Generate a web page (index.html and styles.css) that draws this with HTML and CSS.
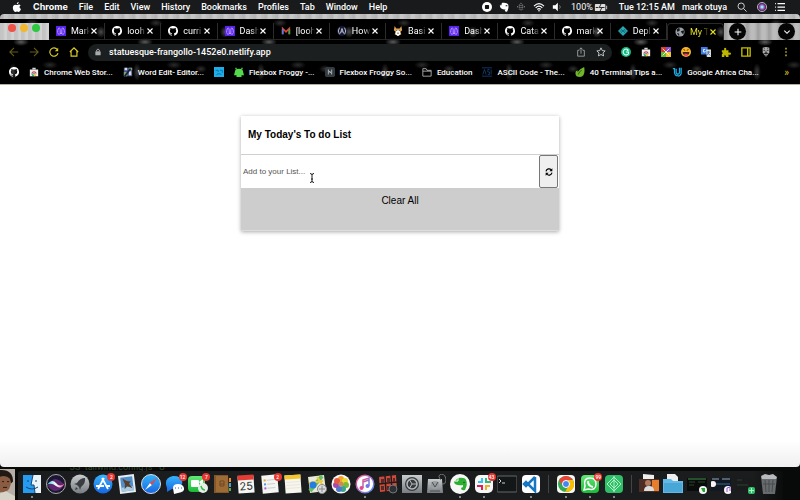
FILE: index.html
```html
<!DOCTYPE html>
<html lang="en">
<head>
<meta charset="utf-8">
<title>My Today's To do List</title>
<link rel="stylesheet" href="styles.css">
</head>
<body>
<svg class="defs" aria-hidden="true">
  <defs>
    <symbol id="github" viewBox="0 0 16 16"><path fill="#fff" d="M8 0C3.58 0 0 3.58 0 8c0 3.54 2.29 6.53 5.47 7.59.4.07.55-.17.55-.38v-1.5c-2.01.37-2.53-.49-2.69-.94-.09-.23-.48-.94-.82-1.13-.28-.15-.68-.52-.01-.53.63-.01 1.08.58 1.23.82.72 1.21 1.87.87 2.33.66.07-.52.28-.87.51-1.07-1.78-.2-3.64-.89-3.64-3.95 0-.87.31-1.59.82-2.15-.08-.2-.36-1.02.08-2.12 0 0 .67-.21 2.2.82a7.6 7.6 0 0 1 4 0c1.53-1.04 2.2-.82 2.2-.82.44 1.1.16 1.92.08 2.12.51.56.82 1.27.82 2.15 0 3.07-1.87 3.75-3.65 3.95.29.25.54.73.54 1.48v2.2c0 .21.15.46.55.38A8 8 0 0 0 8 0z"/></symbol>
    <symbol id="close" viewBox="0 0 8 8"><path d="M1.500 1.500l5 5M6.500 1.500l-5 5" stroke="currentColor" stroke-width="1.100" fill="none"/></symbol>
    <symbol id="purple" viewBox="0 0 12 12"><path fill="#5a22f0" d="M0 0h12v12H0z"/><path d="M2 8c0-7 3-7 3-3v3c0 2 2 2 2 0V5c0-4 3-4 3 3M2 9l2 1 2-2 2 2 2-1" fill="none" stroke="#c9b3ff"/></symbol>
    <symbol id="store" viewBox="0 0 12 12"><path fill="#eee" d="M1 3h10v8H1z"/><path fill="#d8d8d8" d="M4 1h4v2H4z"/><path fill="#e33b2e" d="M3 8a3 3 0 0 1 6 0z"/><path fill="#2ca94f" d="M3 8h3v3C4 11 3 10 3 8z"/><path fill="#f9c51b" d="M6 8h3c0 2-1 3-3 3z"/><circle cx="6" cy="8" r="1.400" fill="#3977e8" stroke="#fff" stroke-width=".6"/></symbol>
    <linearGradient id="blue" x2="0" y2="1"><stop stop-color="#35b5fa"/><stop offset="1" stop-color="#1765e3"/></linearGradient>
    <linearGradient id="green" x2="0" y2="1"><stop stop-color="#62e875"/><stop offset="1" stop-color="#19ba36"/></linearGradient>
    <linearGradient id="silver" x2="0" y2="1"><stop stop-color="#c9cdd0"/><stop offset="1" stop-color="#777c80"/></linearGradient>
    <linearGradient id="tune" x2="1" y2="1"><stop stop-color="#f74d86"/><stop offset="1" stop-color="#4c8dfa"/></linearGradient>
    <radialGradient id="siri"><stop stop-color="#fff"/><stop offset=".25" stop-color="#65d7ed"/><stop offset=".6" stop-color="#a2379d"/><stop offset="1" stop-color="#171936"/></radialGradient>
    <linearGradient id="wave"><stop stop-color="#35cfe0"/><stop offset=".5" stop-color="#fff"/><stop offset="1" stop-color="#ef3f8f"/></linearGradient>
  </defs>
</svg>

<header class="menubar">
  <nav class="menus" aria-label="Application menu">
    <svg class="i10" viewBox="0 0 16 18"><path fill="#fff" d="M11 0c.1 2-1.500 4-3.400 4C7.400 2 9 .3 11 0zM14.500 6c-3 2-2.300 5.600.7 6.800C14 16 12.500 18 11 18c-1 0-1.700-.7-3-.7s-2 .7-3 .7c-2.300 0-4.500-4-4.500-7.500C.5 7 2.600 4.800 5 4.800c1.300 0 2.200.8 3.200.8s2-.9 3.600-.9c1 0 2 .4 2.700 1.300z"/></svg>
    <strong>Chrome</strong><span>File</span><span>Edit</span><span>View</span><span>History</span><span>Bookmarks</span><span>Profiles</span><span>Tab</span><span>Window</span><span>Help</span>
  </nav>
  <div class="status">
    <svg class="i10" viewBox="0 0 12 12"><circle cx="6" cy="6" r="6" fill="#fff"/><rect x="3.500" y="3.500" width="5" height="5" rx="1" fill="#111"/></svg>
    <svg class="i10" viewBox="0 0 12 12"><path fill="#fff" d="M1 4l3-3c2 0 6 0 7 2 1 3 0 6-1 8-1 1-3 1-3-1l1-1H6c-3 0-5-2-5-5z"/><path fill="#111" d="M8 4h2v1H8zM3 1v3H1z"/></svg>
    <svg class="i10" viewBox="0 0 12 12"><path d="M6 1v10M4 3v6M8 3v6M2 5v2M10 5v2" stroke="#aaa" stroke-dasharray="1.500 1"/></svg>
    <svg class="i12" viewBox="0 0 14 12"><path d="M1 5q6-6 12 0M3 7q4-4 8 0M5 9q2-2 4 0" fill="none" stroke="#fff" stroke-width="1.400"/><circle cx="7" cy="10.500" r="1" fill="#fff"/></svg>
    <svg class="i10" viewBox="0 0 12 12"><path fill="#fff" d="M1 4h3l3-3v10L4 8H1z"/><path d="M9 4q2 2 0 4" fill="none" stroke="#888"/></svg>
    <span class="pct">100%</span>
    <svg class="i14 battery" viewBox="0 0 16 10"><rect x="1" y="1" width="12" height="8" rx="1" fill="#ddd"/><path fill="#ddd" d="M14 3h1v4h-1z"/><path d="M2 5h3M9 5h3M8 1L6 5h3L7 9" fill="none" stroke="#111"/></svg>
    <span class="time">Tue 12:15 AM</span><span>mark otuya</span>
    <svg class="i10 push" viewBox="0 0 12 12"><circle cx="5" cy="5" r="3.800" fill="none" stroke="#eee"/><path d="M8 8l3.500 3.500" stroke="#eee"/></svg>
    <svg class="i10 push" viewBox="0 0 12 12"><circle cx="6" cy="6" r="5.500" fill="url(#siri)" stroke="#ccc"/></svg>
    <svg class="i12" viewBox="0 0 14 12"><path d="M4 2h9M4 6h9M4 10h9M1 2h1M1 6h1M1 10h1" stroke="#fff" stroke-width="1.500"/></svg>
  </div>
</header>

<div class="window">
  <div class="frame"></div>
  <div class="chrome">
    <div class="tabstrip">
      <div class="lights"><i class="red"></i><i class="amber"></i><i class="lime"></i></div>
      <div class="tabs">
        <div class="tab"><svg><use href="#purple"/></svg><span>Mark</span><button aria-label="Close"><svg><use href="#close"/></svg></button></div>
        <div class="tab"><svg><use href="#github"/></svg><span>looh</span><button aria-label="Close"><svg><use href="#close"/></svg></button></div>
        <div class="tab"><svg><use href="#github"/></svg><span>curri</span><button aria-label="Close"><svg><use href="#close"/></svg></button></div>
        <div class="tab"><svg><use href="#purple"/></svg><span>Dash</span><button aria-label="Close"><svg><use href="#close"/></svg></button></div>
        <div class="tab"><svg viewBox="0 0 12 12"><path d="M2 10V3l4 4 4-4v7" fill="none" stroke="#e94235" stroke-width="2"/><path d="M2 4v6" stroke="#4285f4" stroke-width="2"/><path d="M10 4v6" stroke="#34a853" stroke-width="2"/></svg><span>[looh</span><button aria-label="Close"><svg><use href="#close"/></svg></button></div>
        <div class="tab"><svg viewBox="0 0 12 12"><circle cx="6" cy="6" r="6" fill="#15183a"/><path d="M3 2Q0 6 3 10M9 2q3 4 0 8M4 9l2-6 2 6M5 7h2" fill="none" stroke="#ddd"/></svg><span>How</span><button aria-label="Close"><svg><use href="#close"/></svg></button></div>
        <div class="tab"><svg viewBox="0 0 12 12"><path fill="#d9a050" d="M2 0l2 3h4l2-3 1 5-2 2 1 3-4 2-4-2 1-3-2-2z"/><path fill="#fff" d="M4 5h4l1 5-3 2-3-2z"/><path fill="#222" d="M4 5h1v1H4zM7 5h1v1H7zM5 8h2v1H5z"/></svg><span>Basi</span><button aria-label="Close"><svg><use href="#close"/></svg></button></div>
        <div class="tab"><svg><use href="#purple"/></svg><span>Dash</span><button aria-label="Close"><svg><use href="#close"/></svg></button></div>
        <div class="tab"><svg><use href="#github"/></svg><span>Cata</span><button aria-label="Close"><svg><use href="#close"/></svg></button></div>
        <div class="tab"><svg><use href="#github"/></svg><span>mark</span><button aria-label="Close"><svg><use href="#close"/></svg></button></div>
        <div class="tab"><svg viewBox="0 0 12 12"><path fill="#2aa8b2" d="M6 0l6 6-6 6-6-6z"/><path d="M3 3l6 6M9 3L3 9M2 6h8" stroke="#146a7e"/></svg><span>Depl</span><button aria-label="Close"><svg><use href="#close"/></svg></button></div>
        <div class="tab active"><svg viewBox="0 0 12 12"><circle cx="6" cy="6" r="5.500" fill="#9aa0a6"/><path fill="#161616" d="M2 3l3-2 1 3-3 2zM7 5l4-1-1 5-2-2zM2 7l3 1v3z"/></svg><span>My T</span><button aria-label="Close"><svg><use href="#close"/></svg></button></div>
      </div>
      <div class="strip-end">
        <button class="round" aria-label="New tab"><svg viewBox="0 0 12 12"><path d="M6 1v10M1 6h10" stroke="#fff" stroke-width="1.600"/></svg></button>
        <button class="round" aria-label="Search tabs"><svg viewBox="0 0 12 12"><path d="M2 4l4 4 4-4" fill="none" stroke="#fff" stroke-width="1.600"/></svg></button>
      </div>
    </div>

    <div class="toolbar">
      <div class="nav">
        <button aria-label="Back"><svg viewBox="0 0 12 12"><path d="M11 6H1M6 1L1 6l5 5" fill="none" stroke="#655d16" stroke-width="1.300"/></svg></button>
        <button aria-label="Forward"><svg viewBox="0 0 12 12"><path d="M1 6h10M6 1l5 5-5 5" fill="none" stroke="#655d16" stroke-width="1.300"/></svg></button>
        <button aria-label="Reload"><svg viewBox="0 0 12 12"><path d="M10 3a5 5 0 1 0 .8 4.500" fill="none" stroke="#d8cc22" stroke-width="1.400"/><path d="M7 5h4V1z" fill="#d8cc22"/></svg></button>
        <button aria-label="Home"><svg viewBox="0 0 12 12"><path d="M1 6l5-5 5 5M2.500 5v6h7V5" fill="none" stroke="#d8cc22" stroke-width="1.400"/></svg></button>
      </div>
      <div class="omnibox">
        <svg class="lock" viewBox="0 0 12 12"><rect x="2" y="5" width="8" height="6" rx="1" fill="#a8abad"/><path d="M4 5V3q2-3 4 0v2" fill="none" stroke="#a8abad" stroke-width="1.500"/></svg>
        <input type="text" aria-label="Address" value="statuesque-frangollo-1452e0.netlify.app">
        <svg viewBox="0 0 12 12"><path d="M4 4H2v7h8V4H8M6 8V1M4 3l2-2 2 2" fill="none" stroke="#aaa"/></svg>
        <svg viewBox="0 0 12 12"><path d="M6 1l1.500 3.300 3.500.4-2.600 2.400.7 3.600L6 9l-3.100 1.700.7-3.600L1 4.700l3.500-.4z" fill="none" stroke="#ddd"/></svg>
      </div>
      <div class="extensions">
        <svg viewBox="0 0 12 12"><circle cx="6" cy="6" r="6" fill="#13b981"/><path d="M9 4a3.500 3.500 0 1 0 0 4V6H6M9 4L7 4" fill="none" stroke="#e5fff5" stroke-width="1.300"/></svg>
        <svg><use href="#store"/></svg>
        <svg viewBox="0 0 12 12"><path fill="#d63b32" d="M0 0h6v6H0z"/><path fill="#8c4cca" d="M6 0h6v6H6z"/><path fill="#67b92e" d="M0 6h6v6H0z"/><path fill="#f0c52b" d="M6 6h6v6H6z"/><path d="M2 2l8 8M10 2L2 10" stroke="#fff"/></svg>
        <svg viewBox="0 0 12 12"><circle cx="6" cy="6" r="6" fill="#f7b42c"/><path d="M2 6h8q0 4-4 4T2 6z" fill="#442315"/><path fill="#f04a63" d="M4 8h4v3H4z"/><path d="M3 3l2 1M9 3L7 4" stroke="#442315"/></svg>
        <svg viewBox="0 0 12 12"><path fill="#3d7de7" d="M0 0h8v9H0z"/><path fill="#ddd" d="M6 3h6v9H7z"/><path d="M5 3H3v3h2V5" fill="none" stroke="#fff"/><path d="M7 6h4M9 5v2l-2 3M8 7l3 3" stroke="#456fad" fill="none"/></svg>
        <svg viewBox="0 0 12 12"><path fill="#bdb600" d="M1 4h3q-1-3 1-3t1 3h3v3q3-1 3 1T9 9v3H6q0-3-2-2v2H1V9q2-2 0-3z"/></svg>
        <svg viewBox="0 0 12 12"><path d="M1 1h10v10H1zM8 1v10" fill="none" stroke="#c6bd00" stroke-width="1.600"/></svg>
        <svg viewBox="0 0 12 12"><path fill="#aaa" d="M2 1q4-2 8 0v6L6 12 2 7z"/><path d="M3 4h2M7 4h2M6 5v3M3 8l3-1 3 1M6 9v3M4 1v1M8 1v1" stroke="#222"/></svg>
        <svg viewBox="0 0 12 12"><path d="M6 1v2M6 5v2M6 9v2" stroke="#c8bd22" stroke-width="1.700"/></svg>
      </div>
    </div>

    <nav class="bookmarks" aria-label="Bookmarks">
      <a href="#" aria-label="GitHub"><svg><use href="#github"/></svg></a>
      <a href="#"><svg><use href="#store"/></svg>Chrome Web Stor...</a>
      <a href="#"><svg viewBox="0 0 12 12"><path fill="#48537f" d="M1 1h10v10H1z"/><path fill="#d5d7ed" d="M2 1h3v3H2zM7 5h3v5H7z"/><path fill="#78a66a" d="M7 1h4v3H7zM1 6h4v5H1z"/><path d="M2 11L9 2" stroke="#181b42" stroke-width="2"/></svg>Word Edit- Editor...</a>
      <a href="#" aria-label="Bookmark"><svg viewBox="0 0 12 12"><path fill="#20aee9" d="M0 0h12v12H0z"/><path d="M2 4h3v2M7 4h3v3M3 9q3-2 6 0" stroke="#096c9c" fill="none"/></svg></a>
      <a href="#"><svg viewBox="0 0 12 12"><path fill="#55d94c" d="M1 6q0-4 5-4t5 4l1 4H9v2H3v-2H0z"/><path d="M3 3L2 1M9 3l1-2" stroke="#55d94c" stroke-width="1.500"/></svg>Flexbox Froggy -...</a>
      <a href="#"><svg viewBox="0 0 12 12"><rect width="12" height="12" rx="2" fill="#343b41"/><path d="M4 3v6M8 3v6M4 4l4 4M4 6h4" fill="none" stroke="#b5bcc1"/></svg>Flexbox Froggy So...</a>
      <a href="#"><svg viewBox="0 0 12 12"><path d="M1 11V2h4l1 2h5v7zM1 5h10" fill="none" stroke="#bbb"/></svg>Education</a>
      <a href="#"><svg viewBox="0 0 12 12"><path d="M0 1h12M0 11h12M1 9l2-6 2 6M9 3H7v3h2v3H7M11 3v6" stroke="#174073" fill="none"/></svg>ASCII Code - The...</a>
      <a href="#"><svg viewBox="0 0 12 12"><path fill="#70b52c" d="M11 0q2 11-5 12Q-1 12 1 5l2-1v2q3-4 8-6z"/><path d="M4 9Q5 5 8 4" stroke="#244b0b" fill="none"/></svg>40 Terminal Tips a...</a>
      <a href="#"><svg viewBox="0 0 12 12"><path d="M1 2h2v5q1 4 4 3M5 2v5q2 3 4 0V1M11 1v7q-1 3-4 3" fill="none" stroke="#1cade4" stroke-width="1.500"/></svg>Google Africa Cha...</a>
      <button class="more" aria-label="More bookmarks">»</button>
    </nav>
  </div>

  <main class="page">
    <section class="card">
      <h1>My Today's To do List</h1>
      <form class="entry">
        <input type="text" aria-label="New item" placeholder="Add to your List...">
        <button type="button" aria-label="Refresh"><svg viewBox="0 0 12 12"><path d="M1.500 5A4.500 4.500 0 0 1 9.500 3M10.500 7A4.500 4.500 0 0 1 2.500 9" fill="none" stroke="#000" stroke-width="1.700"/><path d="M11 .5V5H6.500zM1 11.500V7h4.500z"/></svg></button>
        <svg class="cursor" viewBox="0 0 6 10"><path d="M1 .5q2 0 2 1.500v6q0 1.500-2 1.500M5 .5Q3 .5 3 2M5 9.500Q3 9.500 3 8M2 6h2" fill="none" stroke="#222"/></svg>
      </form>
      <button class="clear">Clear All</button>
    </section>
  </main>
</div>

<footer class="desktop">
  <svg class="portrait" viewBox="0 0 15 32" preserveAspectRatio="none"><path fill="#b7aea5" d="M0 0h15v32H0z"/><path fill="#8a5c42" d="M0 6q9-5 11 6 0 10-7 12H0z"/><path fill="#201914" d="M0 1q13-1 13 12l-2 2-1-5q-4-4-10-2z"/><path d="M2 13h2M7 13h2M3 19h4" stroke="#2a1710"/><path fill="#d7d3c9" d="M0 25l6-2 9 5v4H0z"/></svg>
  <span class="behind">JS&nbsp; tailwind.config.js &nbsp; U</span>
  <div class="dock">
    <div class="apps main-apps">
      <div class="app run"><svg viewBox="0 0 20 20"><path fill="#eaf4fb" d="M1 1h18v18H1z"/><path fill="#249bf0" d="M1 1h10L9 11h3l1 8H1z"/><path d="M6 6v2M14 6v2M4 13q6 4 12 0M11 1L9 11h3l1 8" fill="none" stroke="#174471"/></svg></div>
      <div class="app"><svg viewBox="0 0 20 20"><circle cx="10" cy="10" r="9.500" fill="#191731" stroke="#aaa"/><path d="M2 12q4-8 8-7t8 5q-2 6-8 7-5 0-8-5z" fill="#7b2f88" opacity=".7"/><path fill="url(#wave)" d="M1 11q5-7 9-2t9 0q-4 7-9 3t-9-1z"/></svg></div>
      <div class="app"><svg viewBox="0 0 20 20"><circle cx="10" cy="10" r="9.500" fill="url(#silver)"/><path fill="#393d40" d="M15 4q-5 0-8 5L4 10l3 1 2 2 1 3 1-3q5-4 4-9zM6 13l2 2-3 1z"/></svg></div>
      <div class="app"><svg viewBox="0 0 20 20"><circle cx="10" cy="10" r="9.500" fill="url(#blue)"/><path d="M11 4L5 15M9 4l6 11M3 12h8M14 12h3" stroke="#fff" stroke-width="1.800"/></svg><b>2</b></div>
      <div class="app"><svg viewBox="0 0 20 20"><g transform="rotate(-7 10 10)"><path fill="#e7edf1" d="M2 1h16v18H2z"/><path fill="#4d8fca" d="M4 3h12v14H4z"/><path fill="#a9c9e0" d="M4 13h12v4H4z"/><path fill="#5d3e29" d="M6 4l4 3 4 1-2 2 3 5-5-3-3 3 1-5z"/></g></svg></div>
      <div class="app"><svg viewBox="0 0 20 20"><circle cx="10" cy="10" r="9.500" fill="url(#blue)" stroke="#ddd"/><path fill="#fff" d="M4 16l5-7 2 2z"/><path fill="#f04435" d="M16 4L9 9l2 2z"/></svg></div>
      <div class="app"><svg viewBox="0 0 20 20"><path fill="url(#blue)" d="M2 14q-4-10 6-12 11 0 9 8-3 6-10 5l-5 3z"/><path fill="#fff" d="M8 14q0-4 5-4t6 4-6 5l-4 1z"/><path d="M10 14h1M13 14h1M16 14h1" stroke="#1765e3"/></svg><b>12</b></div>
      <div class="app"><svg viewBox="0 0 20 20"><rect y="2" width="17" height="16" rx="4" fill="url(#green)"/><rect x="3" y="6" width="8" height="7" rx="1" fill="#fff"/><path fill="#fff" d="M11 8l4-3v8z"/><circle cx="15" cy="14" r="5" fill="#e7eee8"/><path d="M13 12q1 4 4 4" stroke="#2fbe47" stroke-width="1.500" fill="none"/></svg><b>7</b></div>
      <div class="app"><svg viewBox="0 0 20 20"><path fill="#835728" d="M2 1h14l1 18H2z"/><path fill="#9c6b36" d="M4 2h12v16H4z"/><path d="M8 7v5h4V7zM8 10h4" stroke="#704822" fill="none"/><path fill="#ef8e27" d="M17 4h2v4h-2z"/><path fill="#479ecf" d="M17 9h2v4h-2z"/><path fill="#57ac4e" d="M17 14h2v3h-2z"/></svg></div>
      <div class="app"><svg viewBox="0 0 20 20"><g transform="rotate(-4 10 10)"><path fill="#f5f5f2" d="M2 2h16v17H2z"/><path fill="#e33c34" d="M2 1h16v5H2z"/><text x="10" y="16" text-anchor="middle" font-family="Inter, sans-serif" font-size="11" fill="#333">25</text></g></svg></div>
      <div class="app"><svg viewBox="0 0 20 20"><g transform="rotate(-5 10 10)"><path fill="#f4f4f3" d="M2 1h16v18H2z"/><path d="M7 6h8M7 10h8M7 14h8" stroke="#ccc"/><path d="M4 6h2" stroke="#f0a02e" stroke-width="2"/><path d="M4 10h2" stroke="#459ee3" stroke-width="2"/><path d="M4 14h2" stroke="#ae59cc" stroke-width="2"/></g></svg><b>2</b></div>
      <div class="app"><svg viewBox="0 0 20 20"><g transform="rotate(-4 10 10)"><path fill="#f7f5ec" d="M2 1h16v18H2z"/><path fill="#f5c52a" d="M2 1h16v4H2z"/><path d="M3 8h14M3 11h14M3 14h14" stroke="#e8e7e0"/></g></svg></div>
      <div class="app"><svg viewBox="0 0 20 20"><path fill="#e8ead9" d="M1 3l16-2 2 16-16 2z"/><path d="M3 17L15 2" stroke="#67bd65" stroke-width="4"/><path d="M10 3l7 10M2 9l14-2" stroke="#eeca42" stroke-width="2"/><circle cx="6" cy="11" r="3.500" fill="#257ddd"/><circle cx="15" cy="15" r="4.500" fill="#ddd" stroke="#888"/><path d="M15 12v6M12 15h6" stroke="#888"/></svg></div>
      <div class="app"><svg viewBox="0 0 20 20"><circle cx="10" cy="10" r="9.500" fill="#f9f9f9"/><circle cx="10" cy="5" r="3" fill="#f3a22a"/><circle cx="14" cy="7" r="3" fill="#e9d92f"/><circle cx="15" cy="11" r="3" fill="#78b936"/><circle cx="12" cy="15" r="3" fill="#3aa391"/><circle cx="8" cy="15" r="3" fill="#4e79c9"/><circle cx="5" cy="11" r="3" fill="#a64aad"/><circle cx="6" cy="7" r="3" fill="#e85b42"/><circle cx="10" cy="10" r="2.500" fill="#c98c55"/></svg></div>
      <div class="app run"><svg viewBox="0 0 20 20"><circle cx="10" cy="10" r="8.800" fill="#fff" stroke="url(#tune)" stroke-width="1.500"/><path d="M8 14V6l6-2v8M8 8l6-2" fill="none" stroke="url(#tune)" stroke-width="1.500"/><circle cx="6.500" cy="14" r="2" fill="#e7478c"/><circle cx="12.500" cy="12" r="2" fill="#7574e8"/></svg></div>
      <div class="app"><svg viewBox="0 0 20 20"><path fill="#ce493c" d="M1 3l17-2 1 15-17 2z"/><path d="M1 10l18-2M7 2l1 16M13 1l1 15" stroke="#241918" stroke-width="1.500"/><path fill="#502c28" d="M3 5h3v4H3zM9 4h3v4H9zM15 4h2v4h-2zM3 12h3v4H3zM9 12h3v4H9z"/><circle cx="15" cy="15" r="4" fill="#2c3035" stroke="#72777a"/></svg></div>
      <div class="app"><svg viewBox="0 0 20 20"><path fill="url(#silver)" d="M0 1h20v18H0z"/><circle cx="10" cy="10" r="7" fill="#363a3d"/><circle cx="10" cy="10" r="5" fill="none" stroke="#b6bbbe" stroke-width="1.500"/><path d="M10 10h5M10 10L7 5M10 10l-3 5" stroke="#b6bbbe"/></svg></div>
      <div class="app"><svg viewBox="0 0 20 20"><path fill="url(#silver)" d="M2 5h14l1 14H1z"/><path d="M15 6q-4-4 0-6 5 0 5 7-1 4-4 3" stroke="#74787a" fill="none"/><circle cx="9" cy="11" r="4" fill="#999ea1"/><path d="M6 8l3 5 3-5M4 17h10" fill="none" stroke="#4b4f52"/></svg></div>
      <div class="app run"><svg viewBox="0 0 20 20"><circle cx="10" cy="10" r="10" fill="#f7f7f7"/><path fill="#2bae31" d="M4 8l4-4q7-1 8 2 2 4-1 10-4 1-4-2l2-1v-2q-8 1-9-3z"/><path d="M5 7h3V4" fill="none" stroke="#fff"/><path fill="#1e6c22" d="M13 8h2v1h-2z"/></svg></div>
      <div class="app run"><svg viewBox="0 0 20 20"><rect x="1" y="1" width="18" height="18" rx="5" fill="#f7f7f7"/><path d="M8 4v5M4 8h4" stroke="#36c5f0" stroke-width="2"/><path d="M12 4v5M12 8h5" stroke="#2eb67d" stroke-width="2"/><path d="M8 11v5M3 12h6" stroke="#e01e5a" stroke-width="2"/><path d="M12 11v5M11 12h5" stroke="#ecb22e" stroke-width="2"/></svg><b>43</b></div>
      <div class="app"><svg viewBox="0 0 20 20"><rect x="0" y="2" width="20" height="16" rx="1" fill="#141718" stroke="#62686b"/><path d="M2 5l2 2-2 2M5 9h3" fill="none" stroke="#ccc"/></svg></div>
      <div class="app run"><svg viewBox="0 0 20 20"><rect x="1" y="1" width="18" height="18" rx="4" fill="#fff"/><path d="M14 3v14l-9-9-2 2 2 2 9-9" fill="none" stroke="#1776c1" stroke-width="2.500"/></svg></div>
    </div>
    <i class="divider"></i>
    <div class="apps web-apps">
      <div class="app run"><svg viewBox="0 0 20 20"><rect x="1" y="1" width="18" height="18" rx="4" fill="#f6f6f6"/><circle cx="10" cy="10" r="8" fill="#35a853"/><path fill="#ea4335" d="M3 6q7-8 14 0H10l-3 6z"/><path fill="#fbbc04" d="M17 6q4 11-8 12l4-7-2-5z"/><circle cx="10" cy="10" r="3.500" fill="#4285f4" stroke="#fff"/></svg></div>
      <div class="app run"><svg viewBox="0 0 20 20"><rect x="1" y="1" width="18" height="18" rx="4" fill="url(#green)"/><path d="M4 16l1-4q-2-8 5-8 6 0 6 6 0 7-8 5z" fill="none" stroke="#fff" stroke-width="1.500"/><path d="M8 7q0 5 5 6" fill="none" stroke="#fff" stroke-width="2"/></svg><b>99</b></div>
      <div class="app run"><svg viewBox="0 0 20 20"><rect x="1" y="1" width="18" height="18" rx="4" fill="#31be68"/><path d="M10 3l7 7-7 7-7-7zM10 6l4 4-4 4-4-4zM10 2v16" fill="none" stroke="#aff3c7"/></svg></div>
    </div>
    <i class="divider"></i>
    <div class="apps files">
      <div class="app"><svg viewBox="0 0 20 20"><path fill="#eee" d="M4 0l11 1v6H4z"/><path fill="#4c2e26" d="M0 5h20v13H0z"/><path fill="#e57d2c" d="M13 6h7v11h-7z"/><circle cx="9" cy="9" r="3" fill="#b2785d"/><path fill="#ddd" d="M5 17q0-5 5-5t5 5z"/></svg></div>
      <div class="app"><svg viewBox="0 0 20 20"><path fill="#eee" d="M4 0h8l3 3v6H4z"/><path fill="#60b9e6" d="M0 5h8l2 2h10v12H0z"/><path fill="#49a7d7" d="M1 9h18v9H1z"/></svg></div>
      <div class="app"><svg viewBox="0 0 20 20"><path fill="#090c0a" d="M0 4h20v13H0z"/><path d="M1 5h18" stroke="#44944d"/><path d="M2 8h6M11 8h7M2 11h5" stroke="#28472c"/><circle cx="16" cy="16" r="4" fill="#f5f5f5"/><path fill="#25a534" d="M14 14h4v4h-2z"/></svg></div>
      <div class="app"><svg viewBox="0 0 20 20"><path fill="#111821" d="M0 4h20v13H0z"/><path d="M1 5h7M11 5h8" stroke="#91a9b9"/><path d="M4 10h15" stroke="#306999"/><circle cx="2" cy="10" r="3" fill="#f5f5f5"/><circle cx="17" cy="16" r="4" fill="#f5f5f5"/><path d="M16 18v-4l3-1v4" fill="none" stroke="#9155d6"/></svg></div>
      <div class="app"><svg viewBox="0 0 20 20"><path fill="#191c1b" d="M0 4h20v13H0z"/><path d="M2 6h5M2 11h11" stroke="#303c35"/><rect x="13" y="13" width="7" height="7" rx="2" fill="#31be68"/><path d="M16.500 14v5M14 16.500h5" stroke="#aff3c7"/></svg></div>
      <div class="app"><svg viewBox="0 0 20 20"><path fill="#676b6d" d="M2 3h16l-2 17H4z"/><path fill="#b8bbbd" d="M2 2l4-2 4 1 4-1 4 3-1 2H3z"/><path d="M6 6l1 12M10 6v12M14 6l-1 12M4 10h12" stroke="#484d4f"/></svg></div>
    </div>
  </div>
</footer>
</body>
</html>
```
FILE: styles.css
```css
* { box-sizing: border-box; }

body {
  margin: 0;
  min-height: 100vh;
  display: flex;
  flex-direction: column;
  background: #080909;
  color: #fff;
  font-family: Roboto, "Liberation Sans", sans-serif;
  font-size: 9px;
  overflow: hidden;
}

button {
  padding: 0;
  border: 0;
  background: none;
  color: inherit;
  font: inherit;
}

svg { flex: none; display: block; }
.defs { position: absolute; width: 0; height: 0; }
.i10 { width: 10px; height: 10px; }
.i12 { width: 12px; height: 10px; }
.i14 { width: 14px; height: 9px; }

.menubar {
  display: flex;
  justify-content: space-between;
  height: 14px;
  padding: 0 14px 0 12px;
  background: #181a1b;
  font-weight: 500;
  line-height: 14px;
  white-space: nowrap;
}
.menus, .status { display: flex; align-items: center; }
.menus { gap: 11px; }
.menus strong { font-family: Inter, sans-serif; }
.status { gap: 7px; }
.pct { margin-left: 2px; font-weight: 400; }
.battery { margin-left: -6px; }
.time { margin-left: 4px; }
.push { margin-left: 3px; }

.window {
  flex: 1;
  display: flex;
  flex-direction: column;
  overflow: hidden;
  border-radius: 4px;
}
.frame {
  height: 5px;
  background: repeating-linear-gradient(90deg, #b4b4b4 0 3px, #c6c6c6 4px 7px, #bababa 9px 11px);
}

.chrome {
  padding-top: 4px;
  border-bottom: 1px solid #b4b09c;
  background-color: #000;
  background-image:
    radial-gradient(ellipse 8px 4px at 21px 23px, #5c5c5c, transparent),
    radial-gradient(ellipse 5px 6px at 101px 13px, #4c4c4c, transparent),
    radial-gradient(ellipse 7px 4px at 32px 4px, #303030, transparent),
    radial-gradient(ellipse 4px 9px at 13px 53px, #3c3c3c, transparent),
    radial-gradient(ellipse 8px 4px at 50px 46px, #2b2b2b, transparent),
    radial-gradient(ellipse 6px 4px at 77px 50px, #303030, transparent);
  background-size: 124px 66px;
}

.tabstrip { display: flex; height: 17px; }
.lights {
  flex: none;
  width: 49px;
  display: flex;
  gap: 4px;
  padding: 1px 8px;
  background: repeating-linear-gradient(90deg, #c4c4c4 0 3px, #d2d2d2 5px 7px);
}
.lights i { width: 8px; height: 8px; border-radius: 50%; }
.red { background: #f05148; }
.amber { background: #f2b72d; }
.lime { background: #2cc840; }

.tabs { flex: 1; min-width: 0; display: flex; }
.tab {
  flex: 1 1 0;
  min-width: 0;
  display: flex;
  align-items: center;
  padding: 0 6px 0 7px;
  border-right: 1px solid #2c2c2c;
  border-bottom: 1px solid #252525;
}
.tab > svg { width: 10px; height: 10px; }
.tab > span {
  flex: 1;
  min-width: 0;
  margin-left: 5px;
  overflow: hidden;
  white-space: nowrap;
  font-size: 9px;
  mask-image: linear-gradient(90deg, #000 60%, transparent);
}
.tab button svg { width: 8px; height: 8px; }
.tab.active {
  border: 1px solid #292929;
  border-bottom: 0;
  border-radius: 4px 4px 0 0;
  color: #e5df25;
}
.strip-end {
  flex: none;
  width: 76px;
  display: flex;
  justify-content: space-between;
  padding: 0 5px;
  background: repeating-linear-gradient(90deg, #a2a2a2 0 2px, #bcbcbc 5px 8px, #ababab 11px);
}
.round {
  width: 17px;
  height: 17px;
  display: grid;
  place-items: center;
  border-radius: 50%;
  background: #050505;
}
.round svg { width: 8px; height: 8px; }

.toolbar {
  display: flex;
  align-items: center;
  height: 24px;
  padding-right: 9px;
}
.nav { width: 88px; display: flex; gap: 10px; padding-left: 9px; }
.nav svg { width: 10px; height: 10px; }
.omnibox {
  flex: 1;
  display: flex;
  align-items: center;
  gap: 10px;
  height: 17px;
  padding: 0 6px;
  border-radius: 9px;
  background: #1c1f20;
}
.omnibox svg { width: 10px; height: 10px; }
.omnibox .lock { width: 8px; }
.omnibox input {
  flex: 1;
  min-width: 0;
  margin-left: -3px;
  padding: 0;
  border: 0;
  outline: 0;
  background: none;
  color: #fff;
  font: 500 9px Roboto, sans-serif;
}
.extensions { display: flex; gap: 10px; margin-left: 9px; }
.extensions svg { width: 10px; height: 10px; }

.bookmarks {
  display: flex;
  align-items: center;
  gap: 10px;
  height: 20px;
  padding: 0 11px 4px 9px;
  font-size: 8px;
  font-weight: 500;
  white-space: nowrap;
}
.bookmarks a { display: flex; align-items: center; gap: 5px; color: #fff; text-decoration: none; }
.bookmarks svg { width: 10px; height: 10px; }
.more { margin-left: auto; color: #d5bb22; font-size: 10px; }

.page {
  flex: 1;
  padding: 31px 16px;
  background: linear-gradient(#fff calc(100% - 26px), #efefef);
  color: #000;
  font-family: "Liberation Sans", Arial, sans-serif;
}
.card {
  max-width: 318px;
  margin: 0 auto;
  background: #fff;
  box-shadow: 0 1px 4px #aaa;
}
.card h1 {
  margin: 0;
  padding: 0 7px;
  border-bottom: 1px solid #d0d0d0;
  font-size: 10px;
  line-height: 38px;
}
.entry { position: relative; display: flex; height: 33px; padding-right: 1px; }
.entry input {
  flex: 1;
  min-width: 0;
  padding: 0 2px;
  border: 0;
  outline: 0;
  font: 8px "Liberation Sans", Arial, sans-serif;
}
.entry input::placeholder { color: #555; opacity: 1; }
.entry button {
  width: 19px;
  display: grid;
  place-items: center;
  border: 1px solid #777;
  border-radius: 2px;
  background: #efefef;
}
.entry button svg { width: 8px; height: 8px; }
.cursor { position: absolute; left: 68px; top: 18px; width: 6px; height: 10px; }
.clear {
  display: block;
  width: 100%;
  padding: 7px 0 23px;
  border-bottom: 1px solid #ddd;
  background: #cdcdcd;
  font-size: 10px;
  line-height: 12px;
  text-align: center;
}

.desktop {
  position: relative;
  display: flex;
  height: 33px;
  padding-top: 2px;
  overflow: hidden;
}
.portrait { width: 15px; height: 31px; }
.behind {
  position: absolute;
  left: 70px;
  top: -4px;
  color: #33492f;
  font-size: 9px;
  line-height: 9px;
}
.dock {
  position: relative;
  flex: 1;
  display: flex;
  margin: 2px 17px 0 3px;
  padding: 3px 4px 0;
  border-radius: 3px 3px 0 0;
  background: linear-gradient(90deg, #1d1e1fe6 96%, #0b0c0ce6);
}
.apps { display: flex; justify-content: space-between; }
.main-apps { flex: 520; }
.web-apps { flex: 68; }
.files { flex: 140; }
.app { position: relative; width: 20px; height: 26px; }
.app svg { width: 20px; height: 20px; }
.app.run::after {
  content: "";
  display: block;
  width: 2px;
  height: 2px;
  margin: 2px auto 0;
  border-radius: 50%;
  background: #aaa;
}
.app b {
  position: absolute;
  top: -1px;
  right: -2px;
  min-width: 8px;
  height: 8px;
  border-radius: 4px;
  background: #e8352f;
  font-size: 5px;
  font-weight: 500;
  line-height: 8px;
  text-align: center;
}
.divider { width: 1px; height: 18px; margin: 1px 7px; background: #444; }
```
